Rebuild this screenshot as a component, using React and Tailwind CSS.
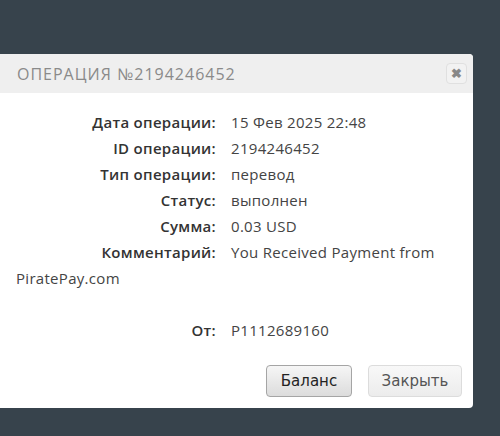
const rows = [
  ["Дата операции:", "15 Фев 2025 22:48"],
  ["ID операции:", "2194246452"],
  ["Тип операции:", "перевод"],
  ["Статус:", "выполнен"],
  ["Сумма:", "0.03 USD"],
];

const Row = ({ label, children }) => (
  <div className="leading-[26px]">
    <span className="inline-block w-[200px] text-right font-semibold text-[#333]">
      {label}
    </span>
    <span className="ml-[15px] text-[#444]">{children}</span>
  </div>
);

export default function App() {
  return (
    <div
      className="w-[500px] h-[436px] bg-[#37434c] pt-[54px] overflow-hidden"
      style={{ fontFamily: "'Open Sans', 'Noto Sans', sans-serif" }}
    >
      <div className="w-[473px] bg-white rounded-tr-[4px] rounded-br-[4px]">
        <div className="h-[39px] bg-[#efefef] flex items-center justify-between pl-[17px] pr-[6px] rounded-tr-[4px]">
          <h2 className="text-[16px] tracking-[1px] font-medium text-[#8a8a8a] uppercase">
            Операция №2194246452
          </h2>
          <button className="w-[21px] h-[21px] rounded-[4px] border border-[#e0e0e0] bg-[#f2f2f2] flex items-center justify-center text-[#888] text-[13px] font-bold leading-none">
            ✖
          </button>
        </div>

        <div className="pl-4 pr-4 pt-[16px] text-[15px] tracking-[0.3px]">
          {rows.map(([l, v]) => (
            <Row key={l} label={l}>
              {v}
            </Row>
          ))}
          <Row label="Комментарий:">You Received Payment from PiratePay.com</Row>
          <div className="h-[26px]" />
          <Row label="От:">P1112689160</Row>
        </div>

        <div className="flex justify-end gap-4 pt-[22px] pb-[11px] pr-[11px]">
          <button
            className="w-[86px] h-[32px] rounded-[4px] border border-[#a5a5a5] bg-gradient-to-b from-[#f6f6f6] to-[#dcdcdc] text-[15px] text-[#222]"
            style={{ fontFamily: "'DejaVu Sans', sans-serif" }}
          >
            Баланс
          </button>
          <button
            className="w-[94px] h-[32px] rounded-[4px] border border-[#dcdcdc] bg-gradient-to-b from-[#f8f8f8] to-[#ececec] text-[15px] text-[#555]"
            style={{ fontFamily: "'DejaVu Sans', sans-serif" }}
          >
            Закрыть
          </button>
        </div>
      </div>
    </div>
  );
}
